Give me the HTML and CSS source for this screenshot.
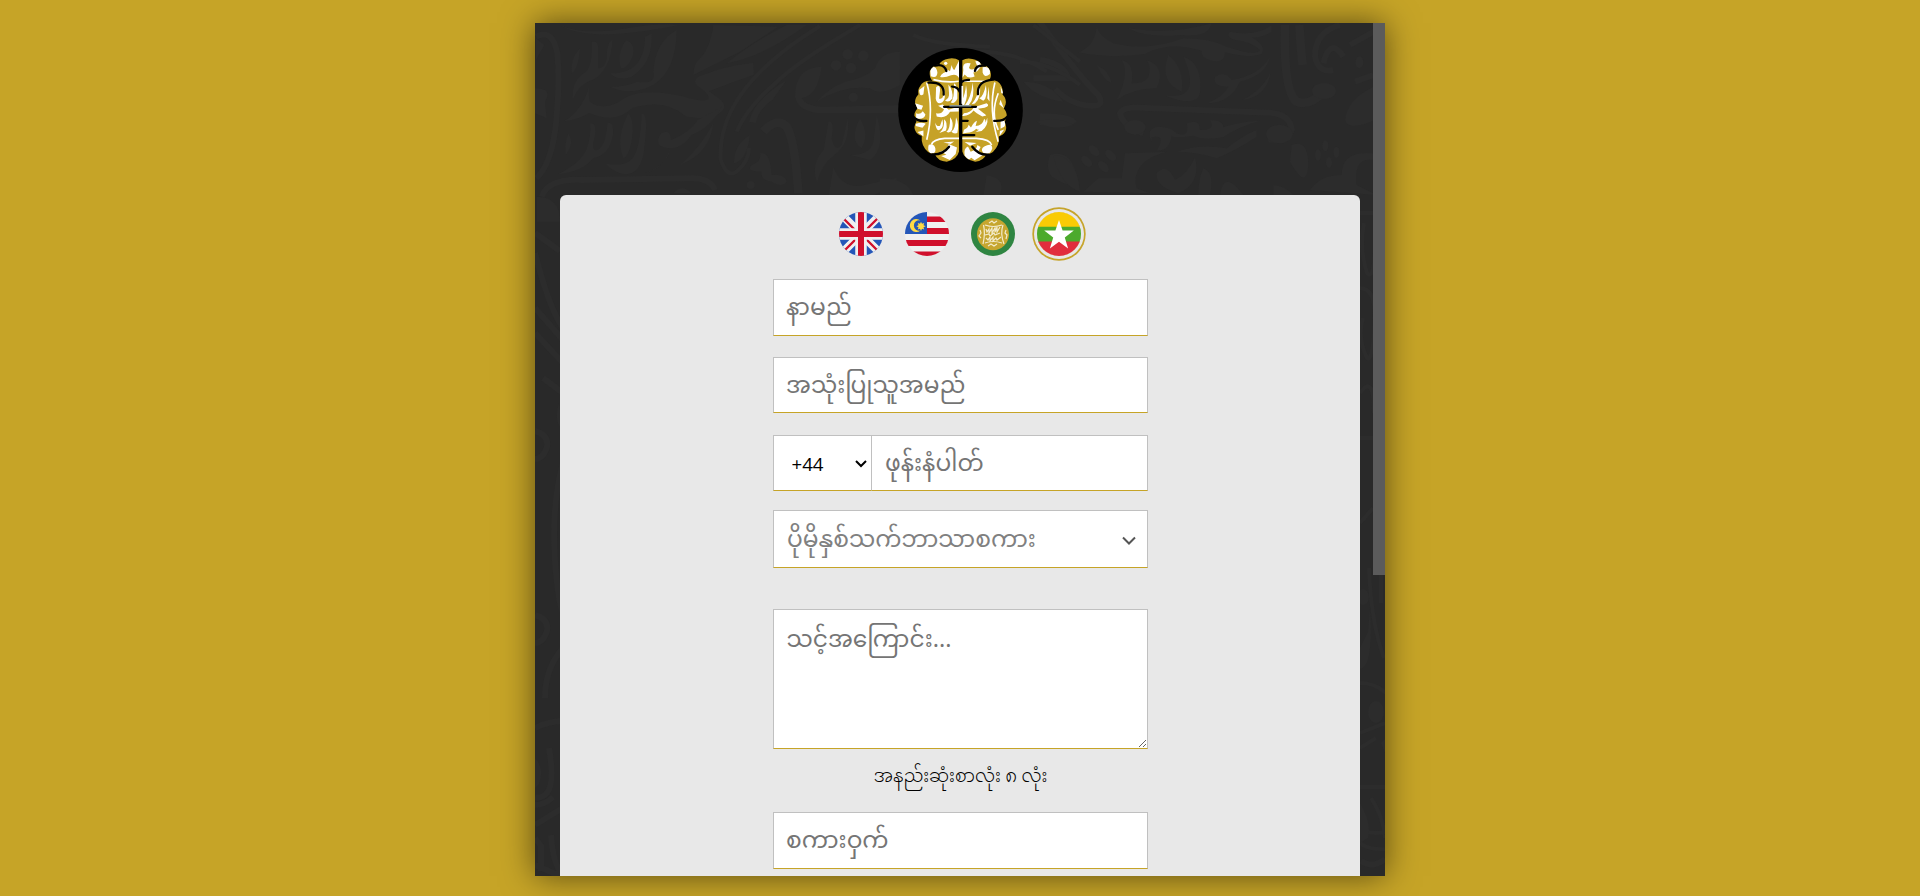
FILE: index.html
```html
<!DOCTYPE html>
<html lang="my">
<head>
<meta charset="utf-8">
<title>မှတ်ပုံတင်</title>
<link rel="stylesheet" href="styles.css">
</head>
<body>
<main class="dialog">
  <svg class="pattern" width="850" height="853" viewBox="0 0 850 853" aria-hidden="true">
    <defs>
      <g id="waves">
        <path d="M180 76q65 30 190 10t165-10q-100 20-175 25-120 10-180-25z"/>
        <path class="ln w18" d="M108 110q50-25 64 50 8 90-3 200-12 130-60 175"/>
        <path class="ln w18" d="M125 590q20-55 120-50l330-5q55 0 70 35"/>
        <path d="M240 145q-30 30-25 75 20-10 25-75zM275 125q20-5 20 20v60q20 0 25-30 0-50 18-55-5 90-60 120-40 10-60 60-5-60 40-85 20-20 17-90zM378 120q30 10 20 50-15 35-35 35-15-40 15-85z"/>
        <path d="M455 100q5 90-60 130-40 15-65-10 60 0 85-35 20-30 20-75zM530 90q0 120-70 165-70 35-130 5 50 0 80-15 60 10 50-30 5-90 70-125zM640 75q-10 70-40 100-20 15-20 50 60-30 140-70 60-40 115-75z"/>
        <path d="M860 75q-100 50-180 115 110-20 240-115z"/>
        <path d="M760 188q-90 10-160 40-30 15 0 35 30 20 25 35-15 10-80-10-110-25-170 5-60 45-105 12-5-20-3-45-20 70-75 104 45-5 75-25 80 35 130-15 100-30 160 25 70 15 95-5 35-20 10-45-20-15-35-25 50-20 135-50z"/>
        <path d="M270 370q25-5 12 50-8 35 10 30 25-10 30-80 20-10 17 35-10 60-60 70-30 40-105 48 70-35 85-75 15-40 11-78zM385 340q20 20 10 85-10 45-25 50-25-60 15-135zM425 340q20 0 10 85-5 90-50 97-35 5-70-32 50 10 75-8 30-20 35-142z"/>
        <path d="M665 320q-30 60-90 85-30 40-60 40-60 0-32-45 30-15 30 20 60-25 80-60zM640 370q-10 90-100 125 60-50 100-125zM510 440q0 50-75 80 65-20 75-80zM205 400q20 30-8 65-5-30 8-65z"/>
        <path class="ln w12" d="M960 78q-310 190-298 400 20 60 50 35 35-30 35-70"/>
        <path class="ln w12" d="M1080 75q-190 110-260 180-80 70-110 140"/>
        <path d="M860 240q-100 60-113 125l20 5q10-45 50-70zM750 405q-50 30-48 85 40-10 48-85z"/>
        <path class="ln w30" d="M790 395q40-45 70-15 25 40 35 200"/>
        <circle cx="1043" cy="163" r="16"/><circle cx="1090" cy="167" r="16"/><circle cx="1008" cy="196" r="16"/><circle cx="1053" cy="204" r="16"/><circle cx="1060" cy="292" r="14"/>
        <path d="M965 200q-80 0-80 90 10 50 90 50h240v-25l-250 5q-45 0-60-25 50-10 60-95zM1200 155q-60 0-75 50-30 30-90 40-50 20-85 60 80-50 160-40 30 25 90-10z"/>
        <path d="M985 365q20-5 10 50 10 45 30 20l18-80q10 75-40 110-40 30-52 85-20-60 20-100zM1080 355q30 50 5 90-40-25-5-90zM1130 345q30 100-20 135l-60-15q60 0 70-40zM1000 500q20 60 80 58l110-25v25l-90 35H985z"/>
        <path d="M780 460q30-10 35 65 40-5 45 20-15 20-45 0-35-5-30-30-50 0-30-20 30-10 25-35z"/>
        <circle cx="752" cy="555" r="12"/><path d="M520 580q25-30 55 0zM110 590q70 0 70 75H110zM108 115l25 20-25 45zM105 265q55 0 30 40l5 50-35-15z"/>
      </g>
      <g id="curls">
        <path class="ln w18" d="M-5 60q130 180 180 225 20 35-20 32-60 0-110-50M0 180q70 10 85 55H-20"/>
        <path d="M0 340q100 0 110 25-20 20-110 10zM170 80q10 30 50 50 100 25 210-15 80 0 130 25 90 30 100 10-25-25-75-30-30-10-15-25 80 15 125-20v20q-30 20-60 17 45 25 30 50-35 15-110-5 0 35-40 25-35-10-30-30-100-30-170 10-110 15-200-5 50-20 55-77z"/>
        <path d="M265 85q130 20 250-15-10 45-90 35-110 10-160-20zM245 180q40 10 30 70 40 0 50-20 10-30-5-50 60 20 30 85-70 0-120 35 40-80 15-120zM385 165q50 40 40 110-70-30-40-110zM430 170q60 20 50 110-10 45-110 5 120 20 60-115zM170 195q40 20 45 55-25-10-45-55z"/>
        <path d="M690 170q-10 55-90 75-30 65-100 65 50-20 65-50-50 0-40-30 30-20 50 10 85-15 115-70zM692 215q-10 75-85 85 60-30 85-85z"/>
        <path class="ln w18" d="M310 400q-60-20-70-60 10-20 60-17l390 15q60 5 65 50-10 35-70 30"/>
        <ellipse cx="285" cy="382" rx="32" ry="22"/><ellipse cx="718" cy="402" rx="40" ry="28"/>
        <path d="M335 425q-20-40 20-45 40 0 55 20 40 15 30-30 40-15 40 20 50 0 30-30 40 0 40 22 60-20 110-20-70 20-110 50-60 10-90-5-60 10-65 0-5 45-45 45 30-50-15-40zM410 455q70-25 150-10 50-40 90-55v20q-60 40-120 65-60-20-120-20z"/>
        <path class="ln w30" d="M735 75q-5 200 35 230 40 15 80-30M778 75q5 80 10 120"/>
        <path class="ln w18" d="M900 75q-75 20-75 95 10 50 55 40m30-40q-40-60-60 20M1010 90l-80 45M1000 225l-55 20"/>
        <ellipse cx="852" cy="273" rx="36" ry="24"/><ellipse cx="958" cy="187" rx="12" ry="18"/>
        <path d="M1000 260q-80 40-85 100 10 35 90 0z"/>
        <path d="M30 465q60-20 80 60 15 60-75 5-20-30-5-65zM130 575l45-40h70l10-75 125-5q-110 30-90 110l40 15zM350 520q30-35 55 20 40-20 60-70 20 80-50 110-70-20-65-60zM490 505q35 10 20 80h-35q0-50 15-80zM540 585q10-80 70 0zM700 585v-30q30 0 60 30zM755 435q50-20 50 60-5 80-55-10zM810 570q30-45 95-45 0-75 95-65v20q-60-10-50 75l60 30z"/>
        <ellipse cx="162" cy="452" rx="20" ry="12" transform="rotate(45 162 452)"/><ellipse cx="212" cy="466" rx="20" ry="12" transform="rotate(45 212 466)"/><ellipse cx="140" cy="484" rx="20" ry="12" transform="rotate(45 140 484)"/><ellipse cx="190" cy="500" rx="20" ry="12" transform="rotate(45 190 500)"/>
        <ellipse cx="856" cy="437" rx="9" ry="17"/><ellipse cx="889" cy="457" rx="9" ry="17"/><ellipse cx="834" cy="465" rx="9" ry="17"/><ellipse cx="867" cy="487" rx="9" ry="17"/>
      </g>
    </defs>
    <use href="#waves" transform="translate(-35 -23) scale(.33333)"/>
    <use href="#curls" transform="translate(505 -23) scale(.33333)"/>
    <g transform="translate(345 -8) scale(.33333)">
      <path class="ln w12" d="M100 60q60 30 230 35M300 110q110 0 200 60M460 30l140 110M420 140q90 0 180 70"/>
      <path d="M430 200q80 0 120 60-80-10-120-60zM470 320q60-20 110 10-60 20-110-10zM520 420q70 0 80 110-60-20-80-110zM320 480q60 10 40 60h-50zM0 490q80 0 100 50H0z"/>
    </g>
    <path class="ln w6" d="M0 210l25 18M0 230q14 55 28 75M0 285l28 32M0 310l28 30M8 355l20 15M0 408q14 4 12 16-4 12-12 12M28 440q-14 50-6 120 2 20 6 30M0 592q14 4 12 16-4 12-12 12M28 625q-18 20-18 50"/>
    <path class="ln w6" d="M0 705q14-7 28-7M14 725q6 35-2 45-6 6-12 4M0 782q10 0 18-8M0 802l26-16M0 815l6 8v25M16 812q2 30 12 40M0 842l25 11"/>
    <path d="M0 735q10 10 4 26l-4 4zM24 380l4 28q-10-10-4-28z"/>
    <path class="ln w4" d="M825 190h13M829 200q-5 25 3 50 6 8 8-20M825 265q15 0 15 30-2 45-8 40-10-20-4-40M825 370q14-20 14 20M825 415h14M838 485l-13 15M834 545q2 55 15 90M846 545v35M825 660q15 0 26 10M825 710l25-10M825 764h26M825 725l16-10M836 775q12 18 14 40M825 805q8 7 25 4M825 820q8 7 25 6"/>
    <ellipse cx="841" cy="689" rx="8" ry="11"/><ellipse cx="828" cy="574" rx="6" ry="8"/><path d="M825 625l8-16 2-25q4 60-10 62zM846 720l4-4v14zM825 780q12 20 8 35l-8 5z"/>
    <path class="ln w6" d="M826 838q12 8 24-2"/>
  </svg>

  <div class="scroller">
    <header class="brand">
      <svg class="logo" viewBox="54 54 375 373" aria-label="logo">
        <defs>
          <path id="brain-shape" d="M237 91Q225 83 205 86Q184 90 178 102Q157 106 149 125Q147 142 157 153Q130 150 120 169Q112 180 115 193Q103 207 105 220L112 236Q101 247 103 263L109 275Q99 291 106 304Q113 317 125 318Q122 348 144 367Q155 374 165 374Q173 394 200 396Q231 390 237 365ZM247 91Q260 83 277 87Q297 90 304 104Q323 105 331 123Q336 139 328 151Q355 148 365 169Q371 181 368 194Q381 207 377 224L372 236Q382 248 381 264L374 276Q382 292 377 304Q370 317 357 320Q360 345 339 367Q330 374 319 374Q311 393 286 396Q253 390 247 365Z"/>
          <clipPath id="brain-clip"><use href="#brain-shape"/></clipPath>
        </defs>
        <ellipse cx="241.500" cy="240.500" rx="187.500" ry="186.500"/>
        <use href="#brain-shape" fill="#c6a227"/>
        <g clip-path="url(#brain-clip)">
          <path class="ink" d="M140 158q22 80 0 172M345 158q-20 80 10 178M154 345q5-16 40-19l95 0q42 3 46 20M160 149q40 10 76 5m12 0h72M355 190q-24 60 0 110"/>
          <path class="blot" d="M150 115q18-12 22 12 0 20-20 12zM308 112q25-6 22 20-16 14-22-4zM146 345q18-4 20 12t-14 14q-12-9-6-26zM313 350q24-12 24 6-8 24-28 12-8-10 4-18zM180 141q5-15 30-18l5-18q3 14 8 15l14-28v52q-8-14-24-8-18 8-33 5zM250 120q-5-26 22-20l-5 14q10 12 25-5l-6-15q14-4 18 12-10 22-24 22l4 12q-20 8-30-6l-7 10z"/>
          <circle cx="203" cy="126" r="6" class="blot"/><circle cx="197" cy="100" r="5" class="blot"/>
          <path class="blot" d="M168 172q12-10 12 10l-3 25q10 0 12-8l4-26q6 38-6 44-16 10-20-10zM205 164q15 18 12 42-10 14-22 6 14-8 12-22zM222 160q12 4 10 46-8 18-20 12 12-12 10-58zM258 165q8 34-5 60l-7 5v-18q10-20 12-47zM278 158q8 48-12 68l-12 2q20-25 24-70zM300 163q4 42-15 58l-10 2q18-20 25-60zM318 165q6 38-8 48l-12-8q12-4 20-40zM326 170l3 45-7-10z"/>
          <path class="blot" d="M168 250q18 4 24-12l-18-10 14-4 18 16 30-10v15l-26 1q-12 22-40 14zM252 250q20-1 30-18l38-12q12 8-6 14l-20 3q20 15 25 20l-12 3q-20-10-26-18-14 18-35 16z"/>
          <path class="blot" d="M165 278q5 14 15 10l7-20q6 25-8 32-10 7-14-22zM192 268q12 8 6 34l-20 8q17-15 14-42zM210 262q12 14 6 38-6 12-17 6 12-8 11-44zM228 262q10 20 4 48-12 4-18-5 12-4 14-43zM252 300q12-5 14-15l7 8q10-18 18-20l-4 16q20 0 26-22 10 10-6 28-12 8-18 2-12 12-28 12l-12 2zM322 264q4 24-17 40l-18 3q28-15 35-43z"/>
          <path class="blot" d="M117 180l16-12-3 25q-12 10-13-13zM105 220l24 8-5 12-18-5zM108 250q12 6 20-6l8 10q-4 17-28 12zM107 282q20-7 30 0l-10 12-20-5zM112 307l18-5v18zM362 170l10 22-8-3zM362 210l10 25-14-12zM362 270q20 0 12 20l-12 7zM360 304l13-5-14 20z"/>
          <path class="blot" d="M178 363q20 5 28-20l25 10-4 20-18 18-26-12 16-4zM254 378q-4-23 10-28l8 16q20-6 20-20l10 6-8 15 20 6-30 19-10-8-8 6zM190 338l32-3-10 8zM254 337l36 3-20 8z"/>
        </g>
        <g class="fold">
          <path d="M242 85V396" stroke-width="8"/>
          <path d="M165 107q27-7 34 16M316 107q-28-3-31 16M145 158q49-3 46 36M340 149q-49 3-46 44M216 170q17 0 24 17M243 157q10-8 24-7M99 260q12 16 40 13M383 260q-12 15-40 13M156 374q32 2 51-23M326 375q-30 2-49-24M244 273h19M244 316h39"/>
          <path d="M192 231h96"/>
        </g>
        <path d="M208 228h66" stroke="#8ca0aa" stroke-width="4"/>
        <path d="M247 168v54" stroke="#fff" stroke-width="5"/>
      </svg>
    </header>

    <section class="panel">
      <nav class="languages">
        <a class="language"><svg class="flag" viewBox="0 0 44 44">
          <defs><clipPath id="disc"><circle cx="22" cy="22" r="22"/></clipPath></defs>
          <g clip-path="url(#disc)">
            <path fill="#2456b8" d="M0 0h44v44H0z"/>
            <path stroke="#f0f0f0" stroke-width="8" d="M0 0l44 44M44 0L0 44"/>
            <path stroke="#d0102c" stroke-width="2.400" d="M4 6l13 13M40 5L27 18M4 40l13-13M40 40L27 27"/>
            <path stroke="#f0f0f0" stroke-width="11.500" d="M22 0v44M0 22h44"/>
            <path stroke="#d0102c" stroke-width="6" d="M22 0v44M0 22h44"/>
          </g></svg></a>
        <a class="language"><svg class="flag" viewBox="0 0 44 44">
          <g clip-path="url(#disc)">
            <path fill="#f0f0f0" d="M0 0h44v44H0z"/>
            <path fill="#d0102c" d="M22 4.500h22v5.500H22zM22 16h22v6H22zM0 28h44v6H0zM0 39.500h44V44H0z"/>
            <path fill="#2456b8" d="M0 0h22v22H0z"/>
            <path fill="#ffda44" d="M15.500 8.500a6.500 6.500 0 1 0 0 10 5.200 5.200 0 1 1 0-10z"/>
            <path fill="#ffda44" d="M16 9.700l1 2.100 2.200-.7-.7 2.200 2.100 1-2.100 1 .7 2.100-2.200-.6-1 2.100-1-2.100-2.200.6.7-2.100-2.100-1 2.100-1-.7-2.200 2.200.7z"/>
          </g></svg></a>
        <a class="language"><svg class="flag" viewBox="0 0 44 44">
          <circle cx="22" cy="22" r="22" fill="#2f8542"/><circle cx="22" cy="22.200" r="16" fill="#c6a62f"/>
          <g class="seal"><path d="M12.500 13q2 8-.5 19M32 13q-3 8 1 19M14 31q8-3 17 0M14 13q8 3 17 0"/>
          <path d="M15 17l1 3 2-3v4l3-5v5l3-5v4l2-5v5l3-5M14 23l4-1 1 2 4-3 1 2 5-2M15 26l2 2 2-3v4l3-4v4l3-3 1 2 4-3M18 11l3-2 2 2 3-2M17 34l3-2 3 2 3-2M9 18l1 3-2 3 2 2M35 18l-1 3 2 2-1 4"/></g>
        </svg></a>
        <a class="language active"><svg class="flag" viewBox="0 0 44 44">
          <g clip-path="url(#disc)"><path fill="#f9cb05" d="M0 0h44v15H0z"/><path fill="#4caa2c" d="M0 14.700h44V30H0z"/><path fill="#e12d3d" d="M0 29.500h44V44H0z"/></g>
          <path fill="#fff" d="M22 8l3.600 10.600h11.200l-9 6.800 3.300 11L22 29.700l-9.100 6.700 3.300-11-9-6.800h11.200z"/>
        </svg></a>
      </nav>

      <form class="form">
        <input class="field name" type="text" placeholder="နာမည်">
        <input class="field username" type="text" placeholder="အသုံးပြုသူအမည်">
        <div class="phone">
          <select class="field code"><option>+44</option></select>
          <input class="field number" type="tel" placeholder="ဖုန်းနံပါတ်">
        </div>
        <div class="field picker">
          <span class="picker-label">ပိုမိုနှစ်သက်ဘာသာစကား</span>
          <svg class="chevron" width="14" height="10" viewBox="0 0 14 10"><path d="M1 1.500L7 7.500l6-6"/></svg>
        </div>
        <textarea class="field about" placeholder="သင့်အကြောင်း..."></textarea>
        <p class="hint">အနည်းဆုံးစာလုံး ၈ လုံး</p>
        <input class="field password" type="text" placeholder="စကားဝှက်">
      </form>
    </section>
  </div>
  <div class="scrollbar"><div class="thumb"></div></div>
</main>
</body>
</html>
```
FILE: styles.css
```css
* { box-sizing: border-box; }

body {
  margin: 0;
  height: 896px;
  padding-top: 23px;
  overflow: hidden;
  background: #c6a427;
  font-family: "Noto Sans Myanmar", "Noto Sans", sans-serif;
}

.dialog {
  position: relative;
  display: flex;
  width: 850px;
  height: 853px;
  margin: 0 auto;
  background: #292929;
  box-shadow: 0 0 31px rgba(0, 0, 0, .55);
}

.pattern {
  position: absolute;
  inset: 0;
  fill: #2c2c2c;
}

.ln { fill: none; stroke: #2c2c2c; }
.w4 { stroke-width: 4; }
.w6 { stroke-width: 6; }
.w12 { stroke-width: 12; }
.w18 { stroke-width: 18; }
.w30 { stroke-width: 26; }

.scroller {
  position: relative;
  width: 838px;
  height: 853px;
  padding: 25px 13px 0 25px;
  overflow: hidden;
}

.brand {
  display: flex;
  justify-content: center;
  height: 147px;
}

.logo { width: 125px; height: 124px; }
.ink { fill: none; stroke: #fff; stroke-width: 5; }
.blot { fill: #fff; }
.fold { fill: none; stroke: #000; stroke-width: 7; stroke-linecap: round; }

.panel {
  width: 800px;
  height: 1200px;
  padding-top: 17px;
  border-radius: 6px;
  background: #e8e8e8;
}

.languages {
  display: flex;
  justify-content: center;
  gap: 22px;
  height: 44px;
}

.language { width: 44px; height: 44px; border-radius: 50%; }
.language.active { box-shadow: 0 0 0 3px #e8e8e8, 0 0 0 4.700px #c6a42b; }
.flag { display: block; width: 44px; height: 44px; }
.seal { fill: none; stroke: #f3ebcb; stroke-width: 1.2; }

.form {
  display: flex;
  flex-direction: column;
  width: 375px;
  margin: 23px auto 0 213px;
}

.field {
  display: block;
  width: 100%;
  margin: 0;
  padding: 4px 12px 0;
  border: 1px solid #c0c0c0;
  border-bottom-color: #c6a427;
  border-radius: 0;
  outline: 0;
  background: #fff;
  font-family: "Noto Sans Myanmar", "Noto Sans", sans-serif;
  font-size: 23.33px;
  font-weight: 400;
}

.field::placeholder { color: #757575; }
.name { height: 57px; }
.username { height: 56px; margin-top: 21px; }

.phone { display: flex; height: 56px; margin-top: 22px; }

.code {
  zoom: 1.25;
  width: 78.4px;
  height: 44.8px;
  padding: 0 0 0 10px;
  border-right: 0;
  color: #000;
  font-family: "Open Sans", "Noto Sans", sans-serif;
  font-size: 14.93px;
}

.number { flex: 1; width: 0; padding-left: 13px; }

.picker {
  display: flex;
  align-items: center;
  justify-content: space-between;
  height: 58px;
  margin-top: 19px;
  padding: 4px 11px 0 13px;
  color: #808080;
}

.picker-label { white-space: nowrap; }
.chevron { fill: none; stroke: #555; stroke-width: 2; }

.about {
  zoom: 1.25;
  height: 112px;
  margin-top: 32.8px;
  padding: 5px 10px;
  font-size: 18.67px;
}

.hint {
  height: 63px;
  margin: 0;
  padding-top: 11px;
  color: #000;
  font-size: 17.78px;
  font-weight: 300;
  line-height: 36px;
  text-align: center;
}

.password { height: 57px; }

.scrollbar { position: relative; width: 12px; }
.thumb { height: 552px; background: #5b5b5b; }
```
